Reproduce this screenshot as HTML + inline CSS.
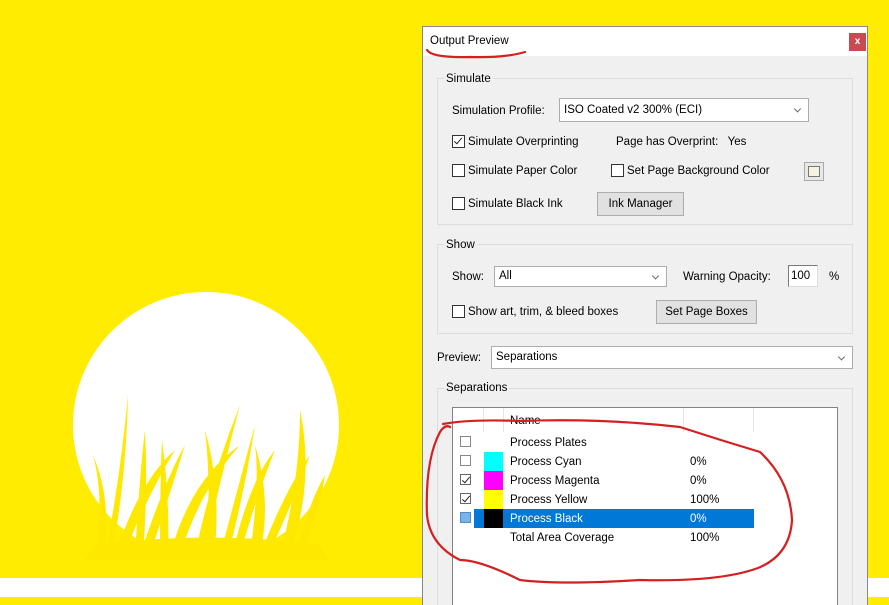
<!DOCTYPE html>
<html><head><meta charset="utf-8"><style>
*{box-sizing:border-box;margin:0;padding:0}
html,body{width:889px;height:605px;overflow:hidden}
body{background:#ffec00;position:relative;font-family:"Liberation Sans",sans-serif;font-size:11.5px;color:#000}
.a{position:absolute;white-space:nowrap}
.t{position:absolute;white-space:nowrap;line-height:14px}
.grp{position:absolute;border:1px solid #dcdcdc}
.leg{position:absolute;background:#f0f0f0;padding:0 2px;line-height:14px}
.cb{position:absolute;width:13px;height:13px;border:1px solid #333;background:#fff}
.sel{position:absolute;background:#fff;border:1px solid #adadad}
.sel:after{content:"";position:absolute;right:8px;top:50%;width:4px;height:4px;border-right:1px solid #666;border-bottom:1px solid #666;transform:translateY(-70%) rotate(45deg)}
.btn{position:absolute;background:#e1e1e1;border:1px solid #adadad;text-align:center}
.chk:after{content:"";position:absolute;left:3px;top:0px;width:3px;height:7px;border-right:1.5px solid #222;border-bottom:1.5px solid #222;transform:rotate(40deg)}
</style></head><body>
<svg class="a" style="left:0;top:0" width="422" height="605">
<circle cx="206" cy="425" r="133" fill="#fff"/>
<g fill="#ffe800">
<path d="M95 555 Q105 500 93 455 Q112 500 104 555Z"/>
<path d="M105 555 Q120 480 128 395 Q126 480 112 555Z"/>
<path d="M115 555 Q140 480 175 450 Q145 500 124 555Z"/>
<path d="M135 555 Q140 470 145 430 Q148 490 143 555Z"/>
<path d="M140 555 Q165 480 185 445 Q168 500 150 555Z"/>
<path d="M160 555 Q160 480 162 440 Q170 500 168 555Z"/>
<path d="M170 555 Q190 480 240 445 Q200 490 180 555Z"/>
<path d="M195 555 Q210 480 240 405 Q220 480 204 555Z"/>
<path d="M205 555 Q212 490 205 430 Q222 490 214 555Z"/>
<path d="M220 555 Q240 480 255 425 Q245 490 228 555Z"/>
<path d="M232 555 Q250 480 275 450 Q255 500 240 555Z"/>
<path d="M250 555 Q260 480 255 445 Q272 500 260 555Z"/>
<path d="M260 555 Q285 490 310 455 Q290 510 268 555Z"/>
<path d="M280 555 Q300 480 300 410 Q315 480 290 555Z"/>
<path d="M295 555 Q310 500 325 475 Q318 520 302 555Z"/>
<path d="M85 560 L330 560 L320 545 Q210 530 95 545Z"/>
</g>
<rect x="0" y="578" width="422" height="19" fill="#fff"/>
</svg>
<div class="a" style="left:868px;top:578px;width:21px;height:19px;background:#fff"></div>
<div class="a" style="left:422px;top:26px;width:446px;height:579px;background:#f0f0f0;border:1px solid #888;border-bottom:none"></div>
<div class="a" style="left:423px;top:27px;width:444px;height:29px;background:#fff"></div>
<div class="t" style="left:430px;top:34px">Output Preview</div>
<div class="a" style="left:849px;top:33px;width:17px;height:18px;background:#c74b50;color:#fff;font-size:10px;text-align:center;line-height:17px;font-weight:bold">x</div>

<div class="grp" style="left:437px;top:78px;width:416px;height:147px"></div>
<div class="leg" style="left:444px;top:72px">Simulate</div>
<div class="t" style="left:452px;top:104px">Simulation Profile:</div>
<div class="sel" style="left:559px;top:98px;width:250px;height:24px"><span class="t" style="left:4px;top:4px">ISO Coated v2 300% (ECI)</span></div>
<div class="cb chk" style="left:452px;top:135px"></div><div class="t" style="left:468px;top:135px">Simulate Overprinting</div>
<div class="t" style="left:616px;top:135px">Page has Overprint:&nbsp;&nbsp; Yes</div>
<div class="cb" style="left:452px;top:164px"></div><div class="t" style="left:468px;top:164px">Simulate Paper Color</div>
<div class="cb" style="left:611px;top:164px"></div><div class="t" style="left:627px;top:164px">Set Page Background Color</div>
<div class="a" style="left:804px;top:162px;width:20px;height:19px;border:1px solid #aaa;background:#e8e8e8"><div class="a" style="left:3px;top:3px;width:12px;height:11px;border:1px solid #777;background:#f4f2e0"></div></div>
<div class="cb" style="left:452px;top:197px"></div><div class="t" style="left:468px;top:197px">Simulate Black Ink</div>
<div class="btn" style="left:597px;top:192px;width:87px;height:24px;line-height:22px">Ink Manager</div>

<div class="grp" style="left:437px;top:244px;width:416px;height:90px"></div>
<div class="leg" style="left:444px;top:238px">Show</div>
<div class="t" style="left:452px;top:270px">Show:</div>
<div class="sel" style="left:494px;top:266px;width:173px;height:21px"><span class="t" style="left:4px;top:2px">All</span></div>
<div class="t" style="left:683px;top:270px">Warning Opacity:</div>
<div class="a" style="left:788px;top:265px;width:30px;height:22px;background:#fff;border:1px solid #7a7a7a;border-right-color:#ddd;border-bottom-color:#ddd"><span class="t" style="left:2px;top:3px">100</span></div>
<div class="t" style="left:829px;top:270px">%</div>
<div class="cb" style="left:452px;top:305px"></div><div class="t" style="left:468px;top:305px">Show art, trim, &amp; bleed boxes</div>
<div class="btn" style="left:656px;top:300px;width:101px;height:24px;line-height:22px">Set Page Boxes</div>

<div class="t" style="left:437px;top:351px">Preview:</div>
<div class="sel" style="left:491px;top:346px;width:362px;height:23px"><span class="t" style="left:4px;top:3px">Separations</span></div>

<div class="grp" style="left:437px;top:388px;width:416px;height:217px;border-bottom:none"></div>
<div class="leg" style="left:444px;top:381px">Separations</div>
<div class="a" style="left:452px;top:407px;width:386px;height:198px;background:#fff;border:1px solid #828282;border-bottom:none"></div>
<div class="a" style="left:483px;top:408px;width:1px;height:24px;background:#e5e5e5"></div>
<div class="a" style="left:503px;top:408px;width:1px;height:24px;background:#e5e5e5"></div>
<div class="a" style="left:683px;top:408px;width:1px;height:24px;background:#e5e5e5"></div>
<div class="a" style="left:753px;top:408px;width:1px;height:24px;background:#e5e5e5"></div>
<div class="t" style="left:510px;top:414px">Name</div>
<div class="a" style="left:474px;top:509px;width:280px;height:19px;background:#0078d7"></div>
<div class="cb" style="left:460px;top:436px;width:11px;height:11px;border-color:#888"></div>
<div class="cb" style="left:460px;top:455px;width:11px;height:11px;border-color:#888"></div>
<div class="cb chk" style="left:460px;top:474px;width:11px;height:11px;border-color:#666"></div>
<div class="cb chk" style="left:460px;top:493px;width:11px;height:11px;border-color:#666"></div>
<div class="cb" style="left:460px;top:512px;width:11px;height:11px;border-color:#4a8fd0;background:#7db4e8"></div>
<div class="a" style="left:484px;top:452px;width:19px;height:19px;background:#00ffff"></div>
<div class="a" style="left:484px;top:471px;width:19px;height:19px;background:#ff00ff"></div>
<div class="a" style="left:484px;top:490px;width:19px;height:19px;background:#ffff00"></div>
<div class="a" style="left:484px;top:509px;width:19px;height:19px;background:#000"></div>
<div class="t" style="left:510px;top:436px">Process Plates</div>
<div class="t" style="left:510px;top:455px">Process Cyan</div><div class="t" style="left:690px;top:455px">0%</div>
<div class="t" style="left:510px;top:474px">Process Magenta</div><div class="t" style="left:690px;top:474px">0%</div>
<div class="t" style="left:510px;top:493px">Process Yellow</div><div class="t" style="left:690px;top:493px">100%</div>
<div class="t" style="left:510px;top:512px;color:#fff">Process Black</div><div class="t" style="left:690px;top:512px;color:#fff">0%</div>
<div class="t" style="left:510px;top:531px">Total Area Coverage</div><div class="t" style="left:690px;top:531px">100%</div>

<svg class="a" style="left:0;top:0" width="889" height="605" fill="none" stroke="#d42020" stroke-width="2.2" stroke-linecap="round">
<path d="M427 50 Q432 58 470 57 Q505 58 525 52"/>
<path d="M443 424 Q470 419 520 421 Q600 418 680 427 Q720 440 760 452 Q790 480 792 520 Q790 555 758 568 Q720 582 640 580 Q560 585 520 580 Q480 560 460 560 Q430 545 427 515 Q425 460 440 432 Q445 424 450 427"/>
</svg>
</body></html>
